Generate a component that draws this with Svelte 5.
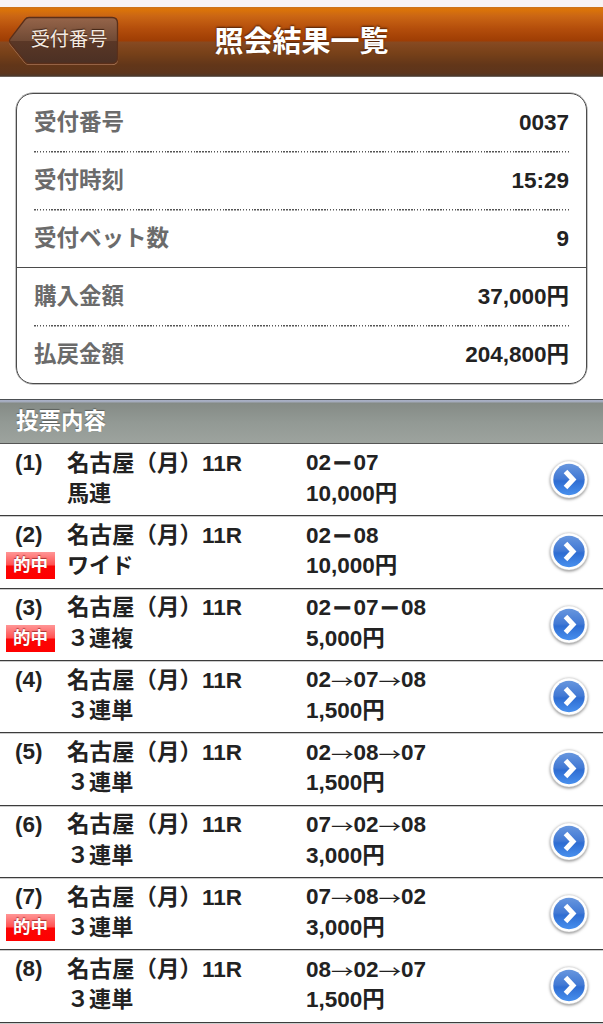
<script>
  const groups = [
    [
      { label: '受付番号', value: '0037' },
      { label: '受付時刻', value: '15:29' },
      { label: '受付ベット数', value: '9' }
    ],
    [
      { label: '購入金額', value: '37,000円' },
      { label: '払戻金額', value: '204,800円' }
    ]
  ];

  const bets = [
    { type: '馬連', nums: ['02', '07'], sep: '－', amount: '10,000円' },
    { type: 'ワイド', nums: ['02', '08'], sep: '－', amount: '10,000円', hit: true },
    { type: '３連複', nums: ['02', '07', '08'], sep: '－', amount: '5,000円', hit: true },
    { type: '３連単', nums: ['02', '07', '08'], sep: '→', amount: '1,500円' },
    { type: '３連単', nums: ['02', '08', '07'], sep: '→', amount: '1,500円' },
    { type: '３連単', nums: ['07', '02', '08'], sep: '→', amount: '3,000円' },
    { type: '３連単', nums: ['07', '08', '02'], sep: '→', amount: '3,000円', hit: true },
    { type: '３連単', nums: ['08', '02', '07'], sep: '→', amount: '1,500円' }
  ];
</script>

<div class="screen">
  <header class="navbar">
    <button class="back">
      <svg class="back-shape" viewBox="0 0 112 52" aria-hidden="true">
        <defs>
          <linearGradient id="back-fill" x1="0" y1="0" x2="0" y2="1">
            <stop offset="0" stop-color="#96654a" />
            <stop offset="0.5" stop-color="#704a35" />
            <stop offset="0.52" stop-color="#5a3726" />
            <stop offset="1" stop-color="#4b3024" />
          </linearGradient>
        </defs>
        <path d="M21 3.5H104Q109.5 3.5 109.5 9V44Q109.5 49.5 104 49.5H21Q18.5 49.5 17 47.5L2 29Q0.8 27 2 25L17 5.5Q18.5 3.5 21 3.5Z" fill="none" stroke="#a87554" stroke-width="1.2" />
        <path d="M21 2.5H104Q109.5 2.5 109.5 8V43Q109.5 48.5 104 48.5H21Q18.5 48.5 17 46.5L2 28Q0.8 26 2 24L17 4.5Q18.5 2.5 21 2.5Z" fill="url(#back-fill)" stroke="#5b2f19" stroke-width="1.3" />
      </svg>
      <span class="back-label">受付番号</span>
    </button>
    <h1>照会結果一覧</h1>
  </header>

  <section class="summary">
    {#each groups as group}
      <div class="group">
        {#each group as row}
          <div class="line">
            <span class="label">{row.label}</span>
            <span>{row.value}</span>
          </div>
        {/each}
      </div>
    {/each}
  </section>

  <h2>投票内容</h2>

  <ul class="bets">
    {#each bets as bet, i}
      <li>
        <div class="no">
          <span class="index">({i + 1})</span>
          {#if bet.hit}<span class="hit">的中</span>{/if}
        </div>
        <div class="race">
          <div>名古屋（月）11R</div>
          <div class="type">{bet.type}</div>
        </div>
        <div class="detail">
          <div>
            {#each bet.nums as num, n}{#if n > 0}<span class={bet.sep === '→' ? 'arrow' : 'dash'}>{bet.sep}</span>{/if}{num}{/each}
          </div>
          <div>{bet.amount}</div>
        </div>
        <svg class="go" viewBox="0 0 44 46" aria-hidden="true">
          <defs>
            <linearGradient id="blue{i}" x1="0" y1="0" x2="0" y2="1">
              <stop offset="0" stop-color="#6796de" />
              <stop offset="0.48" stop-color="#4279d4" />
              <stop offset="0.55" stop-color="#2f6dd2" />
              <stop offset="1" stop-color="#4890ee" />
            </linearGradient>
          </defs>
          <circle class="go-ring" cx="22" cy="20.5" r="18.5" />
          <circle cx="22" cy="20.5" r="15.7" fill="url(#blue{i})" />
          <path d="M18.5 12.5L26 20.5L18.5 28.5" fill="none" stroke="#fff" stroke-width="5" />
        </svg>
      </li>
    {/each}
  </ul>
</div>

<style>
  :global(body) {
    background: #fff;
    overflow: hidden;
  }

  .screen {
    width: 603px;
    height: 1024px;
    overflow: hidden;
    background: #fff;
    color: #222;
    font: bold 22.5px/30.5px "Liberation Sans", "Noto Sans CJK JP", sans-serif;
  }

  .navbar {
    display: grid;
    grid-template-columns: 120px 1fr 120px;
    align-items: center;
    box-sizing: border-box;
    height: 77px;
    border-top: 7px solid #f7f4f5;
    border-bottom: 1px solid #6d625b;
    background: linear-gradient(#c9741f 0, #dc7508 2px, #cb6614 9px, #b34d0b 22px, #9e3d04 34px, #874a22 35px, #784119 46px, #623619 58px, #5d351c 66px, #4d3829 69px);
  }

  .back {
    display: grid;
    width: 112px;
    height: 52px;
    margin: 0 0 1px 8px;
    padding: 0;
    border: 0;
    background: none;
    color: #f5ebe2;
    font: 19.2px/52px "Noto Sans CJK JP", sans-serif;
  }

  .back-shape,
  .back-label {
    grid-area: 1 / 1;
  }

  .back-shape {
    width: 112px;
    height: 52px;
  }

  .back-label {
    padding: 0 0 4px 10px;
    line-height: 46px;
    text-shadow: 0 -1px 1px #3c2012;
  }

  h1 {
    margin: 0 0 5px;
    color: #fff;
    font: bold 29px/60px "Noto Sans CJK JP", sans-serif;
    text-align: center;
    text-shadow: 0 -1px 2px #4b2008;
  }

  .summary {
    box-sizing: border-box;
    width: 571px;
    height: 291px;
    margin: 16px 0 0 16px;
    border: 1.5px solid #4b4b4b;
    border-radius: 17px;
    box-shadow: 0 0 0 0.5px #8a8a8a;
  }

  .group {
    padding: 0 17px;
  }

  .group + .group {
    border-top: 1.5px solid #4b4b4b;
  }

  .line {
    display: flex;
    justify-content: space-between;
    box-sizing: border-box;
    height: 57px;
    line-height: 57px;
  }

  .line + .line {
    height: 58px;
    padding-top: 1px;
    background: repeating-linear-gradient(90deg, #555 0, #555 1.5px, transparent 1.5px, transparent 2.9px) top / 100% 1.5px no-repeat;
  }

  .label {
    color: #6b6b6b;
  }

  h2 {
    box-sizing: border-box;
    height: 45px;
    margin: 15px 0 0;
    padding-left: 16px;
    border-top: 1px solid #4c4f52;
    border-bottom: 1.5px solid #555;
    background: linear-gradient(#a9b0c7 0, #a3aabb 2px, #858b86 3px, #929994 22px, #9da39e 43px);
    color: #fff;
    font: bold 22.5px/39px "Noto Sans CJK JP", sans-serif;
    text-shadow: 0 -1px 1px #5b605c;
  }

  .bets {
    margin: 0;
    padding: 0;
    list-style: none;
  }

  li {
    display: grid;
    grid-template-columns: 67px 239px 241px 44px;
    box-sizing: border-box;
    height: 72.35px;
    padding-top: 4px;
    border-bottom: 1px solid #3c3c3c;
    box-shadow: 0 0.5px 0 #999;
    white-space: nowrap;
  }

  .index {
    display: block;
    padding-left: 15px;
  }

  .race {
    padding-top: 0.5px;
  }

  .detail {
    padding-top: 0.4px;
  }

  .type {
    font-size: 22.1px;
  }

  .hit {
    display: block;
    width: 49px;
    height: 27px;
    margin: 1.5px 0 0 6px;
    background: linear-gradient(#ff9696 0, #ff5252 13px, #fa0505 14px, #f00 100%);
    color: #fff;
    font: bold 17.5px/24px "Noto Sans CJK JP", sans-serif;
    text-align: center;
    text-shadow: 0 -1px 1px #a33;
  }

  .arrow {
    display: inline-block;
    font-family: "Noto Sans CJK JP", sans-serif;
    font-weight: normal;
    line-height: 1;
    transform: translateY(3.5px) scaleY(0.75);
  }

  .dash {
    display: inline-block;
    width: 22.5px;
    font: bold 21px/1 "Noto Sans CJK JP", sans-serif;
    text-align: center;
    -webkit-text-stroke: 1px #222;
  }

  .go {
    width: 44px;
    height: 46px;
    margin-top: 11px;
    overflow: visible;
  }

  .go-ring {
    fill: #fff;
    stroke: #ddd;
    stroke-width: 0.5px;
    filter: drop-shadow(0 1px 1.5px rgba(0, 0, 0, 0.5));
  }
</style>
